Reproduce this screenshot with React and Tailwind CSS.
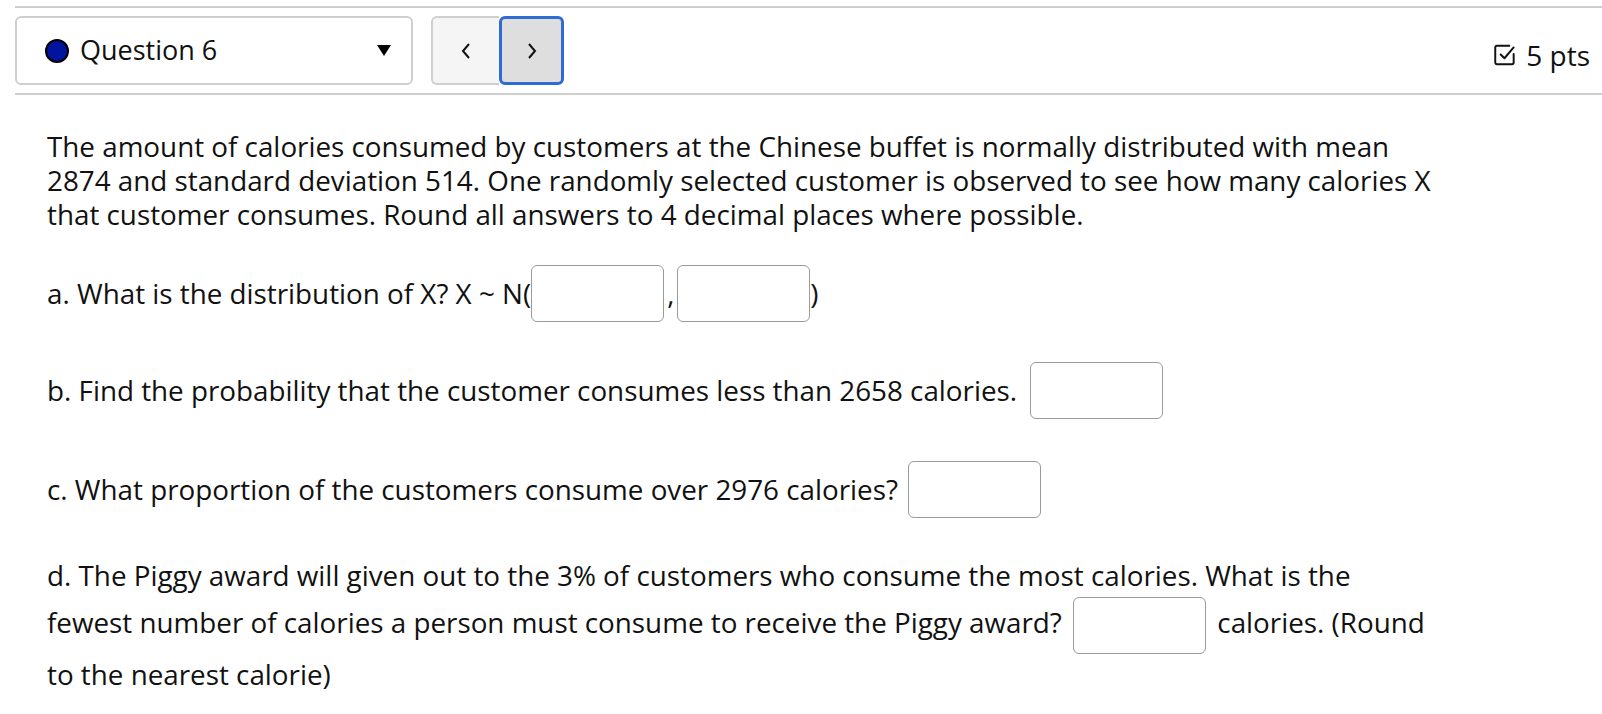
const Field = ({ className = "" }) => (
  <span
    className={
      "inline-block align-middle w-[133px] h-[57px] bg-white border-[1.5px] border-[#9a9a9a] rounded-[6px] " +
      className
    }
  />
);

const PointsIcon = () => (
  <svg width="26" height="26" viewBox="0 0 24 24" fill="none" stroke="#111" strokeWidth="1.8" strokeLinecap="round" strokeLinejoin="round">
    <path d="M20 11v8a1.5 1.5 0 0 1-1.5 1.5h-14A1.5 1.5 0 0 1 3 19V5a1.5 1.5 0 0 1 1.5-1.5H16" />
    <path d="M8 11.5l3.5 3.5L20 5" />
  </svg>
);

export default function App() {
  return (
    <div className="bg-white min-h-screen text-[#111] font-medium font-['Open_Sans','Noto_Sans',sans-serif]">
      <div className="ml-[15px] mt-[6px] border-y-2 border-[#cfcfcf] py-[8px] flex items-center">
        <div className="w-[398px] h-[69px] border-2 border-[#cfcfcf] rounded-[6px] flex items-center pl-[28px] pr-[20px]">
          <span className="w-[24px] h-[24px] rounded-full bg-[#00149e] border-2 border-black" />
          <span className="ml-[11px] text-[27px]">Question 6</span>
          <span className="ml-auto w-0 h-0 border-l-[7px] border-r-[7px] border-t-[11px] border-l-transparent border-r-transparent border-t-black" />
        </div>
        <div className="ml-[18px] flex h-[69px]">
          <button className="w-[68px] h-full bg-[#f5f5f5] border-2 border-r-0 border-[#cfcfcf] rounded-l-[6px] flex items-center justify-center">
            <svg width="14" height="22" viewBox="0 0 14 22" fill="none" stroke="#111" strokeWidth="2">
              <path d="M10 4L4 11l6 7" />
            </svg>
          </button>
          <button className="w-[65px] h-full bg-[#dedede] border-[3px] border-[#2e6bd3] rounded-[6px] flex items-center justify-center">
            <svg width="14" height="22" viewBox="0 0 14 22" fill="none" stroke="#111" strokeWidth="2">
              <path d="M4 4l6 7-6 7" />
            </svg>
          </button>
        </div>
        <div className="ml-auto mr-[12px] mt-[8px] flex items-center gap-[8px] text-[28px]">
          <PointsIcon />
          <span>5 pts</span>
        </div>
      </div>

      <div className="pl-[47px] w-[1437px] text-[27.8px]">
        <p className="mt-[34px] leading-[34px]">
          The amount of calories consumed by customers at the Chinese buffet is normally distributed with mean 2874 and standard deviation 514. One randomly selected customer is observed to see how many calories X that customer consumes. Round all answers to 4 decimal places where possible.
        </p>

        <div className="mt-[34px] h-[57px] flex items-center">
          <span>a. What is the distribution of X? X ~ N(</span>
          <Field />
          <span className="mx-[3px]">,</span>
          <Field />
          <span>)</span>
        </div>

        <div className="mt-[40px] h-[57px] flex items-center">
          <span>b. Find the probability that the customer consumes less than 2658 calories.</span>
          <Field className="ml-[13px]" />
        </div>

        <div className="mt-[42px] h-[57px] flex items-center">
          <span>c. What proportion of the customers consume over 2976 calories?</span>
          <Field className="ml-[10px]" />
        </div>

        <p className="mt-[34px] leading-[47px]">
          d. The Piggy award will given out to the 3% of customers who consume the most calories. What is the fewest number of calories a person must consume to receive the Piggy award?{" "}
          <Field className="mx-[4px] -my-[3px]" /> calories. (Round to the nearest calorie)
        </p>
      </div>
    </div>
  );
}
